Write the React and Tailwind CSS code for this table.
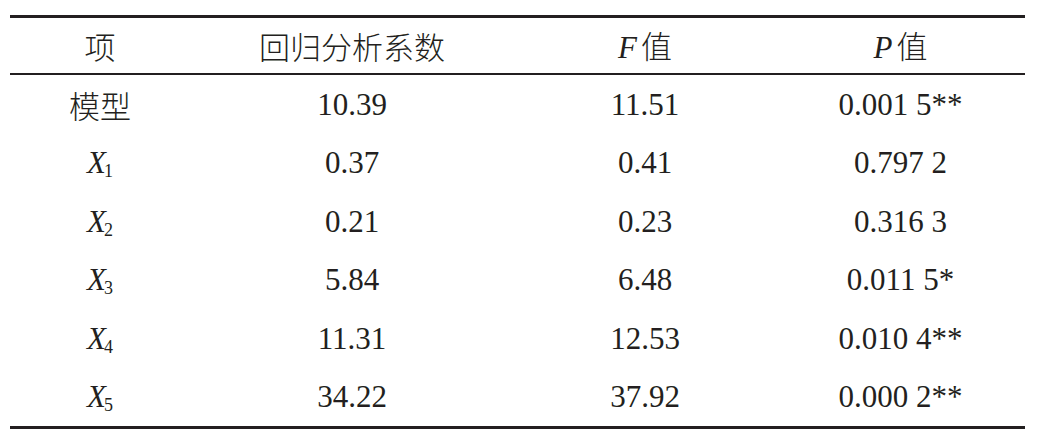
import React from "react";

const rows = [
  { item: "模型", coef: "10.39", f: "11.51", p: "0.001 5**" },
  { item: "X", sub: "1", coef: "0.37", f: "0.41", p: "0.797 2" },
  { item: "X", sub: "2", coef: "0.21", f: "0.23", p: "0.316 3" },
  { item: "X", sub: "3", coef: "5.84", f: "6.48", p: "0.011 5*" },
  { item: "X", sub: "4", coef: "11.31", f: "12.53", p: "0.010 4**" },
  { item: "X", sub: "5", coef: "34.22", f: "37.92", p: "0.000 2**" },
];

const cols = "grid grid-cols-[180px_324px_262px_249px] items-center text-center";
const cjk = "font-['Noto_Sans_CJK_SC',sans-serif] font-light";

const Item = ({ row }) =>
  row.sub ? (
    <span className="whitespace-nowrap">
      <i>{row.item}</i>
      <span className="inline-block text-[18px] -ml-[2px] translate-y-[4px]">{row.sub}</span>
    </span>
  ) : (
    <span className={cjk}>{row.item}</span>
  );

export default function App() {
  return (
    <div className="w-[1042px] h-[442px] bg-white pt-[15px] pl-[10px] text-[#231f20] text-[31px] leading-none font-serif">
      <div className="w-[1015px] border-t-[3px] border-b-[3px] border-[#231f20] font-['Liberation_Serif','Times_New_Roman',serif]">
        {/* header */}
        <div className={`${cols} h-[57px] border-b-2 border-[#231f20]`}>
          <span className={cjk}>项</span>
          <span className={cjk}>回归分析系数</span>
          <span>
            <i>F</i>
            <span className={`${cjk} ml-[4px]`}>值</span>
          </span>
          <span>
            <i>P</i>
            <span className={`${cjk} ml-[4px]`}>值</span>
          </span>
        </div>

        {/* body */}
        <div className="grid grid-rows-6 h-[351px]">
          {rows.map((row, i) => (
            <div key={i} className={cols}>
              <Item row={row} />
              <span>{row.coef}</span>
              <span>{row.f}</span>
              <span>{row.p}</span>
            </div>
          ))}
        </div>
      </div>
    </div>
  );
}
